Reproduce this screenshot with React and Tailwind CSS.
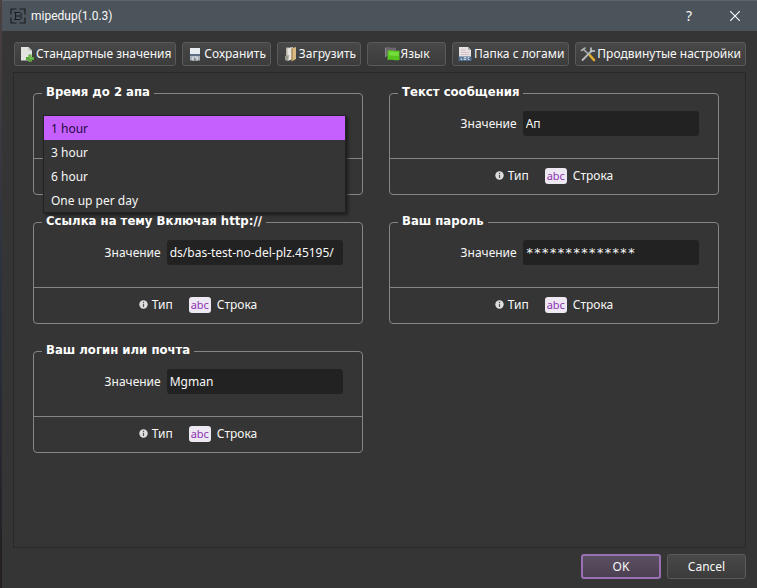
import React, { useState } from 'react';
import { clsx } from 'clsx';

const hours = ['1 hour', '3 hour', '6 hour', 'One up per day'];

function AppIcon() {
  return (
    <svg viewBox="0 0 16 16" className="w-4 h-4" fill="none" stroke="#1b1e20">
      <path d="M6.500 1H1v5.500M9.500 1H15v5.500M6.500 15H1V9.500M9.500 15H15V9.500" strokeWidth="1.200" />
      <path d="M5.500 4.500v7M4 4.500h6L11.500 6v1L10 8l1.500 1v1L10 11.500H4M5.500 8H10" />
    </svg>
  );
}

function DefaultsIcon() {
  return (
    <svg viewBox="0 0 16 16" className="w-4 h-4 shrink-0">
      <path d="M2 1h7.500L13 4.500V14.500H2z" fill="#e3e4df" />
      <path d="M9.500 1v3.500H13z" fill="#b9bab6" />
      <path d="M9.500 8.500h3v2.500H15v3h-2.500V16h-3v-2H7v-3h2.500z" fill="#5aa637" />
      <path d="M10.500 9.500h1v2.500h2.500v1H11V12h-.5z" fill="#82c95f" />
    </svg>
  );
}

function SaveIcon() {
  return (
    <svg viewBox="0 0 16 16" className="w-4 h-4 shrink-0">
      <path d="M3 2h10v12.500H3z" fill="#aab2bb" />
      <path d="M3 2h10v6.500H3z" fill="#e9edf2" />
      <path d="M3 8h10v2H3z" fill="#5f7084" />
      <path d="M5 10.500h6v4H5z" fill="#cbd0d5" />
      <path d="M7 11l3 3.500H7z" fill="#7d848c" />
    </svg>
  );
}

function LoadIcon() {
  return (
    <svg viewBox="0 0 16 16" className="w-4 h-4 shrink-0">
      <path d="M4 1.500h5V14H4z" fill="#b5b1a6" />
      <path d="M5.500 2.500L11 1v12l-5.500 2z" fill="#e6e4dd" />
      <path d="M3 10l4-1-1 6-3-1z" fill="#9b9991" />
      <path d="M9.500 2.500L14 1v12l-4.500 2.500z" fill="#d9b983" />
      <path d="M9.500 2.500l1-.4V15l-1 .5z" fill="#8f713f" />
    </svg>
  );
}

function LanguageIcon() {
  return (
    <svg viewBox="0 0 16 16" className="w-4 h-4 shrink-0">
      <path d="M1 1.500c4-1 6 1 11 0v9c-5 1-8-1-11 0z" fill="#6f6471" />
      <path d="M1.500 2v9" stroke="#8a8a8a" />
      <path d="M3.500 4.500c4-1 7 1 12 0v9.500c-5 1-8-1-12 0z" fill="#58c41f" />
      <path d="M5 5.500c3-.5 6 .8 9.500.3v4c-3.500.4-6.500-.6-9.500-.3z" fill="#74dd3b" />
    </svg>
  );
}

function LogIcon() {
  return (
    <svg viewBox="0 0 16 16" className="w-4 h-4 shrink-0">
      <path d="M2 1h9l3 3v7H2z" fill="#e4e2e4" />
      <path d="M11 1v3h3z" fill="#a9a9ae" />
      <path d="M4 4h5M4 6.500h8M4 8.500h8" stroke="#d8c0c4" />
      <path d="M1.500 10.500h13V15h-13z" fill="#4d6c8d" />
      <path d="M4 11.500v2h1.500M7 11.500h2v2H7zM12.500 11.500H11v2h1.500" stroke="#dbe6f0" strokeWidth=".8" fill="none" />
    </svg>
  );
}

function ToolsIcon() {
  return (
    <svg viewBox="0 0 16 16" className="w-4 h-4 shrink-0" fill="none" strokeLinecap="round">
      <path d="M2.500 14L11.500 5" stroke="#b8bcbf" strokeWidth="1.800" />
      <path d="M11 2v3h3.500" stroke="#c9cccf" strokeWidth="1.500" />
      <path d="M1.500 4.500L5 2M3.500 3.500L9 8.500" stroke="#aeb2b5" strokeWidth="1.600" />
      <path d="M10 9.500l4 4.500" stroke="#e0b02c" strokeWidth="2.600" />
    </svg>
  );
}

function InfoIcon() {
  return (
    <svg viewBox="0 0 9 9" className="w-[9px] h-[9px] shrink-0">
      <circle cx="4.500" cy="4.500" r="4.200" fill="#dedede" />
      <path d="M4.500 1.700v1.200M4.500 3.800v3.200" stroke="#555" strokeWidth="1.200" />
    </svg>
  );
}

const tools = [
  { label: 'Стандартные значения', Icon: DefaultsIcon },
  { label: 'Сохранить', Icon: SaveIcon },
  { label: 'Загрузить', Icon: LoadIcon },
  { label: 'Язык', Icon: LanguageIcon, wide: true },
  { label: 'Папка с логами', Icon: LogIcon },
  { label: 'Продвинутые настройки', Icon: ToolsIcon },
];

function Group({ title, children, footer }) {
  return (
    <fieldset className="relative min-w-0 h-[110px] border border-[#858585] rounded-[4px]">
      <legend className="ml-2 px-1 h-4 text-[13px] leading-[14px] font-bold text-white font-['DejaVu_Sans_Condensed',sans-serif]">
        {title}
      </legend>
      <div className="h-[57px] pt-2.5">{children}</div>
      <div className="flex items-center justify-center h-9 pb-0.5 border-t border-[#858585]">
        {footer}
      </div>
    </fieldset>
  );
}

function TextGroup({ id, title, initial, mono }) {
  const [value, setValue] = useState(initial);

  return (
    <Group
      title={title}
      footer={
        <>
          <InfoIcon />
          <span className="ml-1">Тип</span>
          <span className="ml-4 w-[22px] h-4 rounded-[3px] bg-[#eee8f2] text-[#8d35b5] text-[11px] leading-4 text-center">
            abc
          </span>
          <span className="ml-1.5">Строка</span>
        </>
      }
    >
      <div className="flex items-center gap-1.5 pr-[19px]">
        <label htmlFor={id} className="w-[41%] text-right">Значение</label>
        <input
          id={id}
          type="text"
          value={value}
          onChange={(e) => setValue(e.target.value)}
          className={clsx(
            'flex-1 min-w-0 h-[25px] px-[3px] rounded-[3px] bg-[#222222] outline-none',
            mono && "text-[13px] font-['DejaVu_Sans_Mono',monospace]"
          )}
        />
      </div>
    </Group>
  );
}

export default function App() {
  const [hour, setHour] = useState(hours[0]);

  return (
    <div className="flex min-h-screen bg-[#353535] text-[#f8f8f8] text-[12px] leading-4 font-['Noto_Sans',sans-serif]">
      {/* Desktop edge */}
      <div className="w-[2px] shrink-0 bg-linear-to-b from-[#4a4040] via-[#29313f] to-[#241f22]" />

      <div className="flex-1 min-w-0 flex flex-col">
        {/* Title bar */}
        <header className="flex items-center h-[31px] pl-2 bg-[#4b545b] border-t border-[#5c656c]">
          <AppIcon />
          <h1 className="ml-[5px] flex-1 font-['Roboto',sans-serif]">mipedup(1.0.3)</h1>
          <button type="button" aria-label="Help" className="w-[46px] h-full text-[14px]">?</button>
          <button type="button" aria-label="Close" className="flex items-center justify-center w-[45px] h-full">
            <svg viewBox="0 0 10 10" className="w-[10px] h-[10px]" stroke="#fff" strokeWidth="1.100">
              <path d="M0 0l10 10M10 0L0 10" />
            </svg>
          </button>
        </header>

        {/* Toolbar */}
        <div className="flex gap-1.5 pl-3 pr-[11px] pt-[11px]">
          {tools.map(({ label, Icon, wide }) => (
            <button
              key={label}
              type="button"
              className={clsx(
                'flex flex-auto items-center justify-center gap-px h-6 px-0.5 whitespace-nowrap rounded-[3px] border border-[#5a5a5a] bg-linear-to-b from-[#484848] to-[#3c3c3c]',
                wide && 'min-w-[79px]'
              )}
            >
              <Icon />
              {label}
            </button>
          ))}
        </div>

        {/* Settings */}
        <main className="flex-1 mx-[11px] mt-1.5 border border-[#292929]">
          <div className="grid grid-cols-2 gap-x-[26px] gap-y-[19px] pl-[19px] pr-[26px] pt-3">
            <Group title="Время до 2 апа">
              <select
                aria-label="Время до 2 апа"
                size={4}
                value={hour}
                onChange={(e) => setHour(e.target.value)}
                className="absolute z-10 left-[9px] right-4 top-[14px] h-[98px] overflow-hidden bg-[#353535] border border-[#222222] shadow-[2px_2px_3px_#1c1c1c] outline-none"
              >
                {hours.map((h) => (
                  <option key={h} value={h} className="h-6 px-[7px] pt-1 checked:bg-[#c560ff] checked:text-[#26093d]">
                    {h}
                  </option>
                ))}
              </select>
            </Group>
            <TextGroup id="message" title="Текст сообщения" initial="Ап" />
            <TextGroup id="topic" title="Ссылка на тему Включая http://" initial="ds/bas-test-no-del-plz.45195/" />
            <TextGroup id="password" title="Ваш пароль" initial="**************" mono />
            <TextGroup id="login" title="Ваш логин или почта" initial="Mgman" />
          </div>
        </main>

        {/* Dialog buttons */}
        <footer className="flex justify-end gap-1.5 pt-1.5 pb-[9px] pr-[11px]">
          <button type="button" className="w-20 h-[25px] rounded-[3px] border-2 border-[#9a70b4] bg-linear-to-b from-[#5c4f63] to-[#4b4051]">
            OK
          </button>
          <button type="button" className="w-[79px] h-[25px] rounded-[3px] border border-[#5a5a5a] bg-linear-to-b from-[#484848] to-[#3c3c3c]">
            Cancel
          </button>
        </footer>
      </div>
    </div>
  );
}
